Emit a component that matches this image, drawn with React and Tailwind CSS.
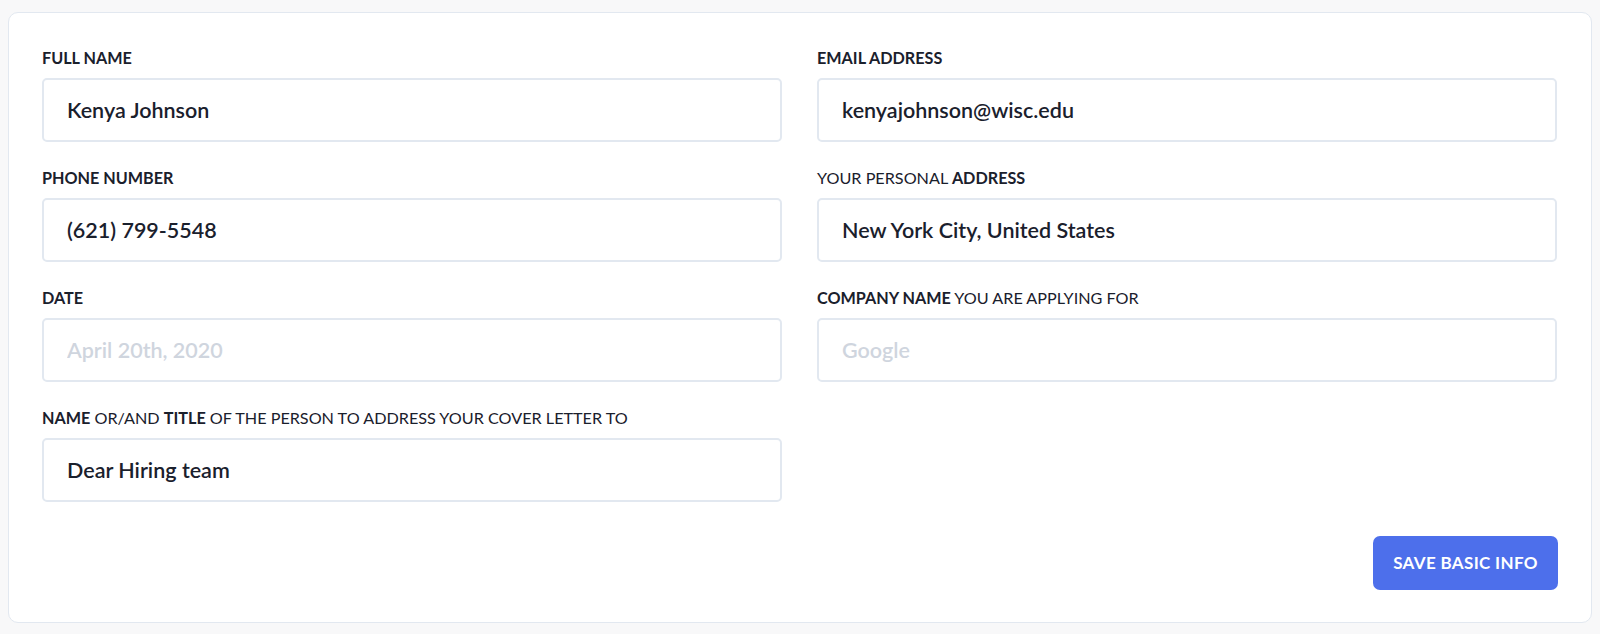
const fields = [
  { label: <><b>FULL NAME</b></>, value: 'Kenya Johnson' },
  { label: <><b>EMAIL ADDRESS</b></>, value: 'kenyajohnson@wisc.edu' },
  { label: <><b>PHONE NUMBER</b></>, value: '(621) 799-5548' },
  { label: <>YOUR PERSONAL <b>ADDRESS</b></>, value: 'New York City, United States' },
  { label: <><b>DATE</b></>, placeholder: 'April 20th, 2020' },
  { label: <><b>COMPANY NAME</b> YOU ARE APPLYING FOR</>, placeholder: 'Google' },
  { label: <><b>NAME</b> OR/AND <b>TITLE</b> OF THE PERSON TO ADDRESS YOUR COVER LETTER TO</>, value: 'Dear Hiring team' },
];

function Field({ label, value, placeholder }) {
  return (
    <div className="flex flex-col">
      <label className="mb-[10px] h-5 whitespace-nowrap text-[16.2px] leading-5 font-normal text-[#1a202c] [&_b]:font-bold">{label}</label>
      <input
        defaultValue={value}
        placeholder={placeholder}
        className="h-[64px] w-full rounded-[5px] border-2 border-[#e2e8f0] bg-white px-[23px] text-[21.5px] font-semibold text-[#1a202c] outline-none placeholder:text-[#cfd5de]"
      />
    </div>
  );
}

export default function App() {
  return (
    <div className="min-h-screen bg-[#f8f8f9] px-2 pt-3 pb-3" style={{ fontFamily: 'Lato, "Noto Sans", sans-serif' }}>
      <div className="rounded-[10px] border border-[#e2e8f0] bg-white pt-[35px] pr-[34px] pb-[32px] pl-[33px]">
        <div className="grid grid-cols-2 gap-x-[35px] gap-y-[26px]">
          {fields.map((f, i) => (
            <Field key={i} {...f} />
          ))}
        </div>
        <div className="mt-[34px] flex justify-end">
          <button className="-mr-px h-[54px] w-[185px] rounded-[7px] bg-[#4d6feb] text-[17px] font-bold tracking-[0.02em] text-white">
            SAVE BASIC INFO
          </button>
        </div>
      </div>
    </div>
  );
}
